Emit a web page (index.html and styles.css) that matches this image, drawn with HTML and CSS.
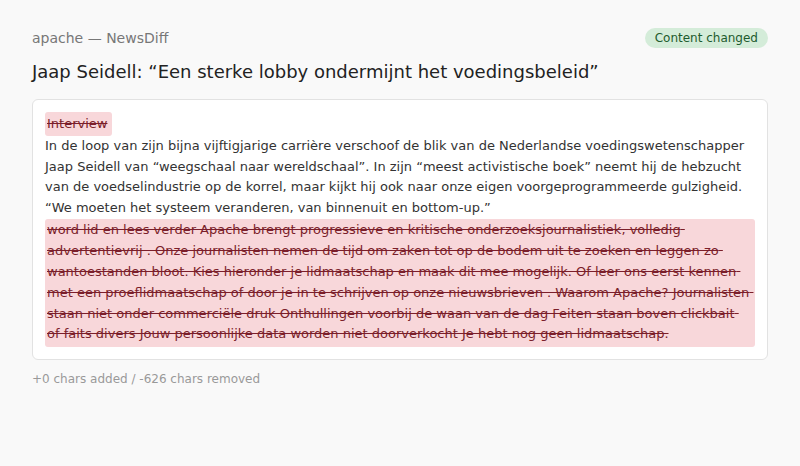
FILE: index.html
```html
<!DOCTYPE html>
<html lang="nl">
<head>
<meta charset="utf-8">
<title>apache — NewsDiff</title>
<link rel="stylesheet" href="styles.css">
</head>
<body>
<div class="page">
  <header class="top">
    <span class="source">apache — NewsDiff</span>
    <span class="badge">Content changed</span>
  </header>
  <h1 class="title">Jaap Seidell: “Een sterke lobby ondermijnt het voedingsbeleid”</h1>
  <div class="card">
    <div class="diff"><del class="rem">Interview</del>
In de loop van zijn bijna vijftigjarige carrière verschoof de blik van de Nederlandse voedingswetenschapper Jaap Seidell van “weegschaal naar wereldschaal”. In zijn “meest activistische boek” neemt hij de hebzucht van de voedselindustrie op de korrel, maar kijkt hij ook naar onze eigen voorgeprogrammeerde gulzigheid. “We moeten het systeem veranderen, van binnenuit en bottom-up.”
<del class="rem">word lid en lees verder Apache brengt progressieve en kritische onderzoeksjournalistiek, volledig advertentievrij . Onze journalisten nemen de tijd om zaken tot op de bodem uit te zoeken en leggen zo wantoestanden bloot. Kies hieronder je lidmaatschap en maak dit mee mogelijk. Of leer ons eerst kennen met een proeflidmaatschap of door je in te schrijven op onze nieuwsbrieven . Waarom Apache? Journalisten staan niet onder commerciële druk Onthullingen voorbij de waan van de dag Feiten staan boven clickbait of faits divers Jouw persoonlijke data worden niet doorverkocht Je hebt nog geen lidmaatschap.</del></div>
  </div>
  <p class="stats">+0 chars added / -626 chars removed</p>
</div>
</body>
</html>
```

FILE: styles.css
```css
html, body {
  margin: 0;
  padding: 0;
  background: #f9f9f9;
}
body {
  font-family: "DejaVu Sans", Verdana, sans-serif;
  color: #222;
}
.page {
  padding: 28px 32px;
}
.top {
  display: flex;
  justify-content: space-between;
  align-items: center;
  height: 20px;
}
.source {
  font-size: 14px;
  color: #777;
}
.badge {
  font-size: 12px;
  color: #1e5b2e;
  background: #d4ecd9;
  border-radius: 10px;
  padding: 0 10px;
  line-height: 20px;
}
.title {
  font-size: 18px;
  font-weight: normal;
  line-height: 24px;
  margin: 12px 0 15px;
  color: #222;
}
.card {
  background: #fff;
  border: 1px solid #e2e2e2;
  border-radius: 6px;
  padding: 12px;
}
.diff {
  white-space: pre-wrap;
  font-size: 13px;
  line-height: 1.6;
  color: #333;
}
.rem {
  display: inline-block;
  background: #f8d7da;
  color: #7b1e2a;
  text-decoration: line-through;
  padding: 1.5px 5px 1.5px 2px;
  border-radius: 3px;
}
.stats {
  margin: 12px 0 0;
  font-size: 12px;
  color: #999;
}
```
